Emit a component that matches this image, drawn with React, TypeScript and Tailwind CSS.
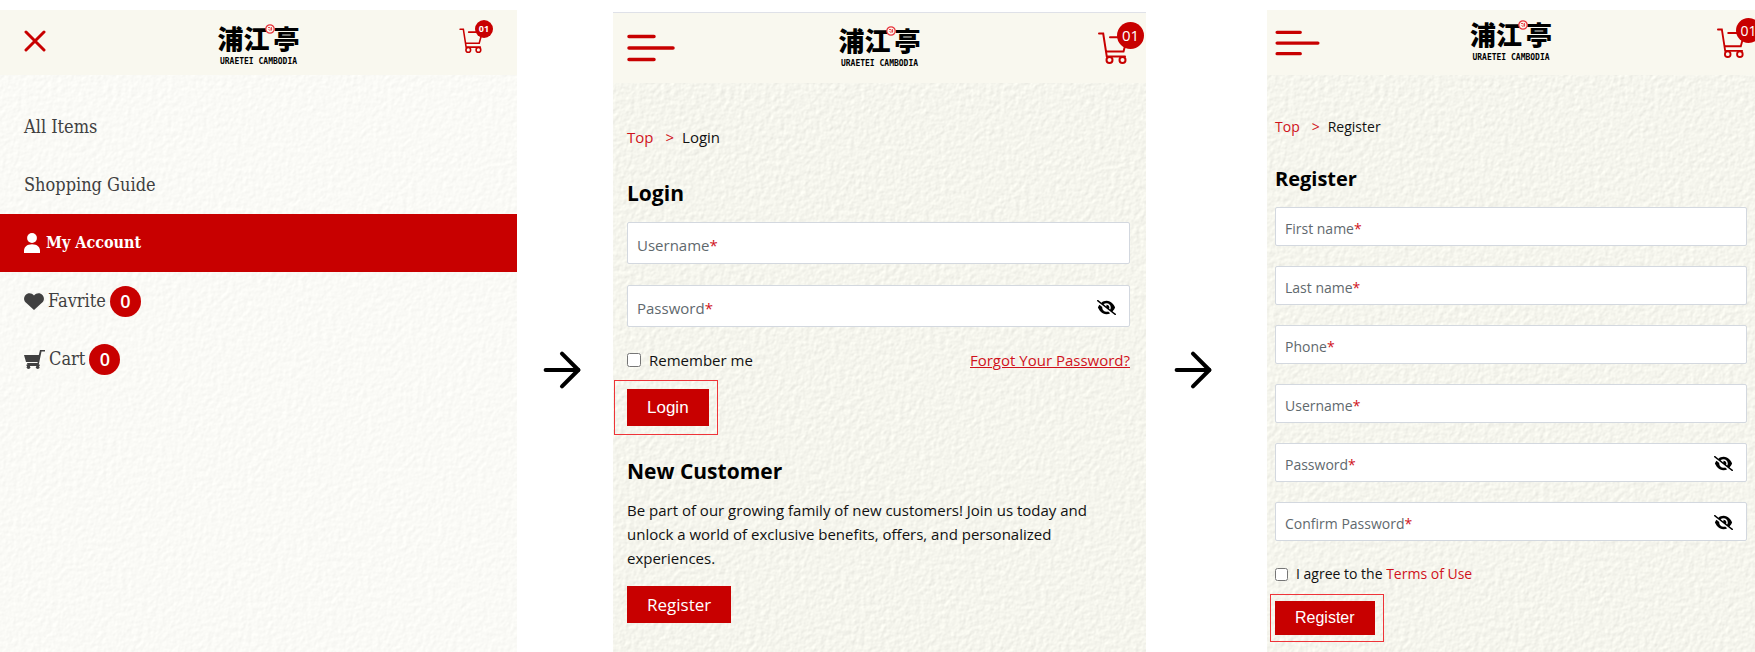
import type { ReactNode } from "react";
import { ArrowRight } from "lucide-react";
import { FaEyeSlash } from "react-icons/fa6";

const menuItems = [
  { label: "All Items" },
  { label: "Shopping Guide" },
  { label: "My Account", icon: "user", active: true },
  { label: "Favrite", icon: "heart", count: 0 },
  { label: "Cart", icon: "cart", count: 0 },
];

const registerFields = [
  { id: "first-name", label: "First name" },
  { id: "last-name", label: "Last name" },
  { id: "phone", label: "Phone" },
  { id: "reg-username", label: "Username" },
  { id: "reg-password", label: "Password", secret: true },
  { id: "reg-confirm", label: "Confirm Password", secret: true },
];

/* Grainy paper behind each screen */
function Paper({ id, color, depth }: { id: string; color: string; depth: number }) {
  return (
    <svg className="absolute inset-0 -z-10 h-full w-full" aria-hidden="true">
      <filter id={id} x="0" y="0" width="100%" height="100%" colorInterpolationFilters="sRGB">
        <feTurbulence type="fractalNoise" baseFrequency="0.2" numOctaves="3" seed="4" />
        <feDiffuseLighting lightingColor={color} surfaceScale={depth} diffuseConstant="1.155">
          <feDistantLight azimuth="225" elevation="60" />
        </feDiffuseLighting>
      </filter>
      <rect width="100%" height="100%" filter={`url(#${id})`} />
    </svg>
  );
}

function Logo() {
  return (
    <a href="#" className="flex flex-col items-center text-black">
      <span className="relative flex items-center font-['Noto_Sans_CJK_JP','Noto_Sans_CJK_SC',sans-serif] text-[26px] leading-8 font-black">
        浦江<span className="ml-1">亭</span>
        <svg viewBox="0 0 10 10" className="absolute top-0.5 left-[48px] size-[10px]" aria-hidden="true">
          <circle cx="5" cy="5" r="4.2" fill="#f9f8ef" stroke="#e8323a" strokeWidth="1.2" />
          <path d="M3 3.5h2.2M3.6 5.2l1.8 1.8M6.4 3v3.6M4.8 5h2.4" stroke="#e8323a" strokeWidth=".9" />
        </svg>
      </span>
      <span className="mt-1 font-['DejaVu_Sans_Mono',monospace] text-[8px] leading-2 font-bold">URAETEI CAMBODIA</span>
    </a>
  );
}

function CartOutline({ className }: { className: string }) {
  return (
    <svg viewBox="0 0 30 32" className={className} fill="none" stroke="#c80000" strokeWidth="2" strokeLinecap="round" aria-hidden="true">
      <path d="M1 1.5h4.2l3.6 23.2M12 5.3h9M9 19.5h16.5l2.2-8M9 24.5h18" />
      <circle cx="11.5" cy="28" r="3" />
      <circle cx="24.5" cy="28" r="3" />
    </svg>
  );
}

function Burger({ className }: { className: string }) {
  return (
    <svg viewBox="0 0 48 28" className={className} fill="none" stroke="#c80000" strokeWidth="3.5" strokeLinecap="round" aria-hidden="true">
      <path d="M2 2.500h25M2 14h44M2 25.500h25" />
    </svg>
  );
}

function MenuIcon({ name }: { name: string }) {
  if (name === "user")
    return (
      <svg viewBox="0 0 16 20" className="h-5 w-4" fill="currentColor" aria-hidden="true">
        <circle cx="8" cy="5" r="4.9" />
        <path d="M0 20v-2.200C0 14 2.800 11.200 8 11.200s8 2.800 8 6.600V20z" />
      </svg>
    );
  if (name === "heart")
    return (
      <svg viewBox="0 0 20 17" className="h-[17px] w-5" fill="currentColor" aria-hidden="true">
        <path d="M10 17 1.500 9.300C-.8 7 0 3.600 1.600 1.900 3.700-.5 7.700-.4 10 2.400c2.300-2.800 6.300-2.900 8.400-.5 1.600 1.700 2.400 5.100.1 7.400z" />
      </svg>
    );
  return (
    <svg viewBox="0 0 21 19" className="h-[19px] w-[21px]" fill="currentColor" aria-hidden="true">
      <path d="M0 5h14.800l1.200-5H21v1.500h-3.500L14.800 14.500h.9V16H2.500v-1.500h1L3 13h10.500l.2-1H2z" />
      <circle cx="4.500" cy="17.200" r="1.800" />
      <circle cx="13.700" cy="17.200" r="1.800" />
    </svg>
  );
}

function Header({ className, left, right }: { className: string; left: ReactNode; right: ReactNode }) {
  return (
    <header className={`grid grid-cols-[1fr_auto_1fr] bg-[#f9f8ef] ${className}`}>
      <div>{left}</div>
      <Logo />
      <div className="flex justify-end">{right}</div>
    </header>
  );
}

function Breadcrumb({ page }: { page: string }) {
  return (
    <nav className="flex leading-6">
      <a href="#" className="text-[#d0121b]">Top</a>
      <span className="mr-2 ml-3 text-[#d0121b]">&gt;</span>
      <span>{page}</span>
    </nav>
  );
}

type FieldProps = { id: string; label: string; secret?: boolean; className: string };

function Field({ id, label, secret, className }: FieldProps) {
  return (
    <div className="relative">
      <input
        id={id}
        type={secret ? "password" : "text"}
        className={`block w-full rounded-xs border border-[#d3d8df] bg-white px-2.5 outline-none ${className}`}
      />
      <label htmlFor={id} className="pointer-events-none absolute inset-0 flex items-center px-2.5 pt-1 text-[#5f696e]">
        {label}
        <span className="text-[#d0121b]">*</span>
      </label>
      {secret && (
        <button type="button" aria-label="Show password" className="absolute inset-y-0 right-3.5 pt-0.5 text-black">
          <FaEyeSlash size={19} />
        </button>
      )}
    </div>
  );
}

function MenuScreen() {
  return (
    <section className="relative isolate mt-[10px] overflow-hidden">
      <Paper id="paper-menu" color="#fafaf6" depth={0.12} />
      <Header
        className="h-[65px] px-6 pt-3"
        left={
          <button type="button" aria-label="Close menu" className="mt-2 block">
            <svg viewBox="0 0 22 22" className="size-[22px]" stroke="#c80000" strokeWidth="3" strokeLinecap="round">
              <path d="M2 2l18 18M20 2L2 20" />
            </svg>
          </button>
        }
        right={
          <a href="#" className="relative mt-1.5 mr-2.5 block h-6">
            <CartOutline className="h-[25px] w-[24px]" />
            <span className="absolute -top-2 -right-2.5 flex size-[18px] items-center justify-center rounded-full bg-[#c80000] text-[9px] font-bold text-white">
              01
            </span>
          </a>
        }
      />
      <ul className="mt-[23px] font-['DejaVu_Serif_Condensed','DejaVu_Serif',serif] text-lg text-[#404040]">
        {menuItems.map((item) => (
          <li key={item.label}>
            <a
              href="#"
              className={`flex h-[58px] items-center px-6 ${item.active ? "gap-1.5 bg-[#c80000] text-base font-bold text-white" : "gap-1"}`}
            >
              {item.icon && <MenuIcon name={item.icon} />}
              <span>{item.label}</span>
              {item.count !== undefined && (
                <span className="flex size-[31px] items-center justify-center rounded-full bg-[#c80000] font-['Open_Sans',sans-serif] font-semibold text-white">
                  {item.count}
                </span>
              )}
            </a>
          </li>
        ))}
      </ul>
    </section>
  );
}

function LoginScreen() {
  return (
    <section className="relative isolate mt-3 overflow-hidden border-t border-[#dfe1e8] text-[15px]">
      <Paper id="paper-login" color="#f5f5ed" depth={0.22} />
      <Header
        className="h-[70px] px-[14px] pt-[11px]"
        left={
          <button type="button" aria-label="Open menu" className="mt-[10px] block">
            <Burger className="h-7 w-12" />
          </button>
        }
        right={
          <a href="#" className="relative mt-2 mr-1 block h-8">
            <CartOutline className="h-8 w-[30px]" />
            <span className="absolute -top-2.5 -right-4 flex size-[27px] items-center justify-center rounded-full bg-[#c80000] text-[15px] text-white">
              01
            </span>
          </a>
        }
      />
      <div className="pt-[42px] pr-4 pl-[14px]">
        <Breadcrumb page="Login" />
        <h1 className="mt-7 text-[21px] leading-8 font-bold text-black">Login</h1>
        <div className="mt-[13px] flex flex-col gap-[21px]">
          <Field id="username" label="Username" className="h-[42px]" />
          <Field id="password" label="Password" secret className="h-[42px]" />
        </div>
        <div className="mt-[21px] flex items-center justify-between leading-6">
          <label className="flex items-center gap-2">
            <input type="checkbox" className="size-[14px]" />
            Remember me
          </label>
          <a href="#" className="text-[#d0121b] underline">Forgot Your Password?</a>
        </div>
        <div className="mt-2 -ml-[13px] w-fit border border-[#ee3338] py-2 pr-2 pl-3">
          <button type="button" className="block h-[37px] bg-[#c80000] px-5 font-['Liberation_Sans',Arial,sans-serif] text-[17px] text-white">
            Login
          </button>
        </div>
        <h2 className="mt-5 text-[21px] leading-8 font-bold text-black">New Customer</h2>
        <p className="mt-[11px] leading-6">
          Be part of our growing family of new customers! Join us today and unlock a world of exclusive benefits, offers,
          and personalized experiences.
        </p>
        <a href="#" className="mt-4 flex h-[37px] w-fit items-center bg-[#c80000] px-5 text-[17px] text-white">
          Register
        </a>
      </div>
    </section>
  );
}

function RegisterScreen() {
  return (
    <section className="relative isolate mt-[10px] overflow-hidden text-sm">
      <Paper id="paper-register" color="#f5f5ed" depth={0.22} />
      <Header
        className="h-[65px] px-2 pt-2"
        left={
          <button type="button" aria-label="Open menu" className="mt-3 block">
            <Burger className="h-[26px] w-[45px]" />
          </button>
        }
        right={
          <a href="#" className="relative mt-[10px] mr-0.5 block h-8">
            <CartOutline className="h-[30px] w-7" />
            <span className="absolute -top-2.5 -right-4 flex size-[25px] items-center justify-center rounded-full bg-[#c80000] text-sm text-white">
              01
            </span>
          </a>
        }
      />
      <div className="px-2 pt-10">
        <Breadcrumb page="Register" />
        <h1 className="mt-6 text-xl leading-8 font-bold text-black">Register</h1>
        <div className="mt-3 flex flex-col gap-5">
          {registerFields.map((f) => (
            <Field key={f.id} {...f} className="h-[39px]" />
          ))}
        </div>
        <label className="mt-[21px] flex items-center gap-2 leading-6">
          <input type="checkbox" className="size-[13px]" />
          <span>
            I agree to the <a href="#" className="text-[#d0121b]">Terms of Use</a>
          </span>
        </label>
        <div className="mt-2 -ml-[5px] w-fit border border-[#ee3338] py-1.5 pr-2 pl-1">
          <button type="button" className="block h-[34px] bg-[#c80000] px-5 font-['Liberation_Sans',Arial,sans-serif] text-base text-white">
            Register
          </button>
        </div>
      </div>
    </section>
  );
}

function Step({ className }: { className: string }) {
  return (
    <div className={`flex items-center pt-[88px] ${className}`}>
      <ArrowRight size={56} strokeWidth={1.75} className="shrink-0 text-black" />
    </div>
  );
}

export default function App() {
  return (
    <main className="grid min-h-screen grid-cols-[517fr_96fr_533fr_121fr_488fr] overflow-hidden bg-white font-['Open_Sans','Noto_Sans',sans-serif] text-[#111]">
      <MenuScreen />
      <Step className="pl-[17px]" />
      <LoginScreen />
      <Step className="pl-[19px]" />
      <RegisterScreen />
    </main>
  );
}
